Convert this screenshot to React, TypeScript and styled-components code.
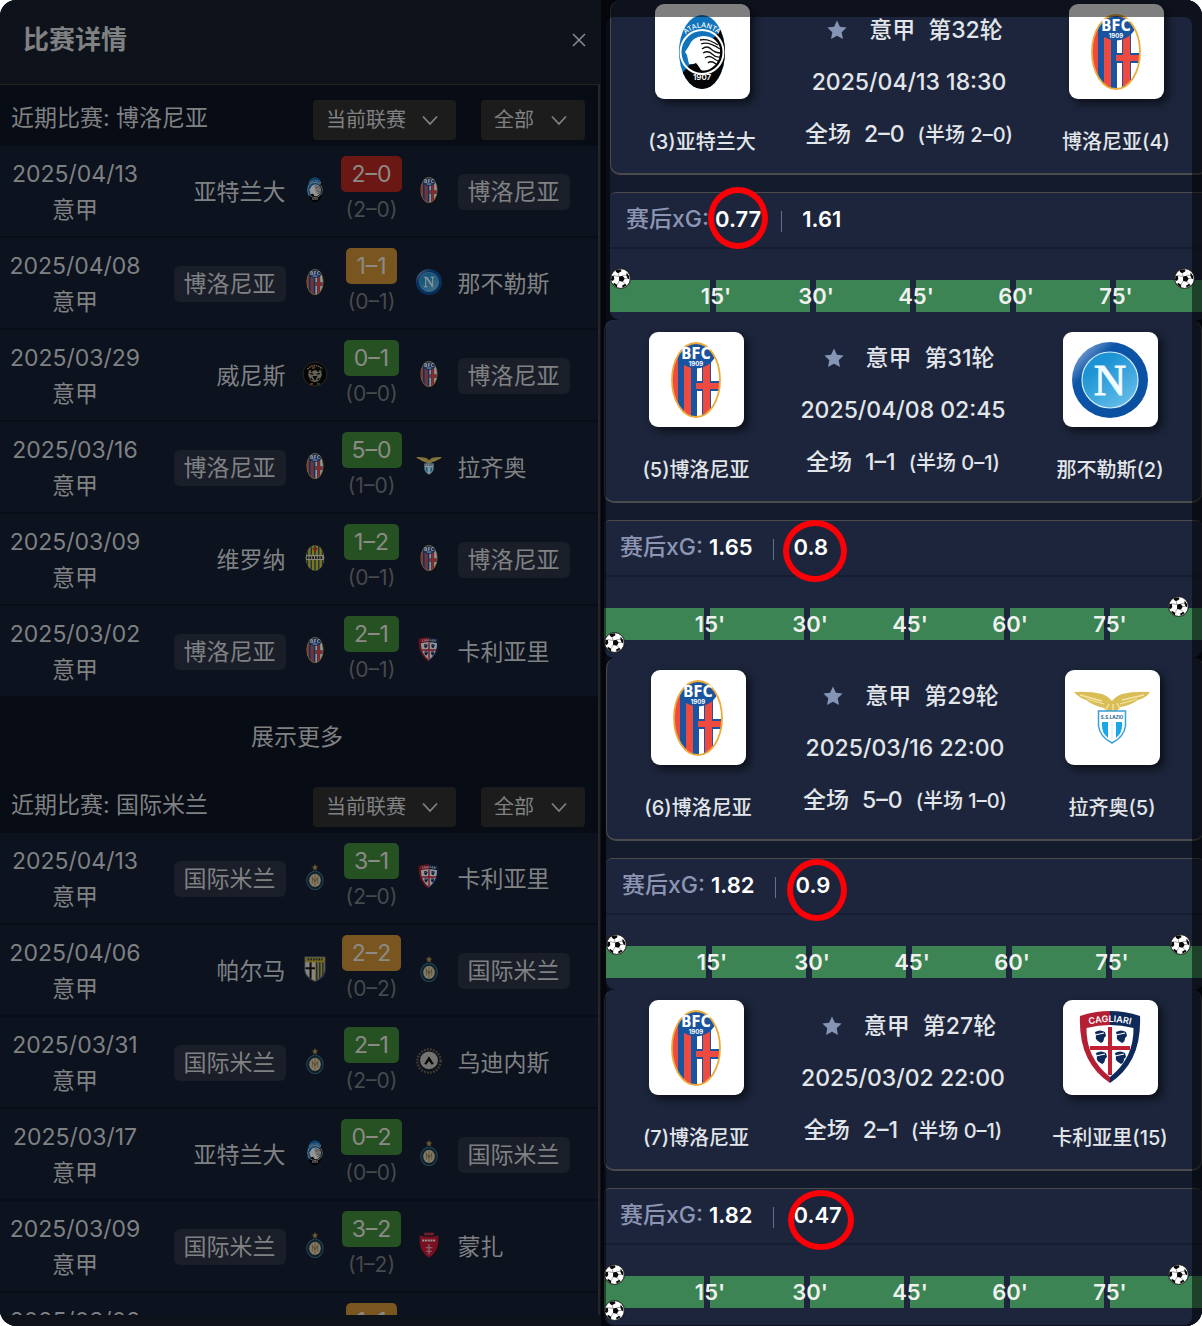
import React, { useId } from "react";
import styled, { createGlobalStyle } from "styled-components";

const GlobalStyle = createGlobalStyle`
  *, *::before, *::after { box-sizing: border-box; }
  body {
    margin: 0;
    background: #ffffff;
    font-family: Inter, "Noto Sans CJK SC", sans-serif;
  }
  button, select { font: inherit; color: inherit; }
  ul { list-style: none; margin: 0; padding: 0; }
  h1, h2, p { margin: 0; font: inherit; }
`;

/* ---------- club crests ---------- */

type Club =
  | "atalanta" | "bologna" | "napoli" | "lazio" | "cagliari" | "venezia"
  | "verona" | "inter" | "parma" | "udinese" | "monza";

const Atalanta = ({ id }: { id: string }) => (
  <>
    <clipPath id={id}><ellipse cx="38" cy="38" rx="23" ry="37" /></clipPath>
    <g clipPath={`url(#${id})`}>
      <rect width="76" height="76" fill="#1273bd" />
      <path d="M62 10 L12 66 V76 H62Z" fill="#050505" />
      <ellipse cx="38" cy="38" rx="21.500" ry="22" fill="none" stroke="#fff" strokeWidth="2" />
      <path d="M24 46 L23 41 L21 38 L25 32 Q28 23 39 22 Q52 22 56 34 Q57 46 50 52 Q43 58 37 56 Q34 51 32 49 Q28 51 25 50Z" fill="#fff" />
      <path d="M36 26 Q44 24 54 31 M37 30 Q44 27 56 35 M38 35 Q43 31 47 35 T57 39 M39 39 Q44 36 48 40 T57 43 M41 44 Q45 41 49 44 T55 47 M44 49 Q47 46 52 50" fill="none" stroke="#111" strokeWidth="1.300" />
    </g>
    <path id={`${id}t`} d="M21 21 Q38 6 55 21" fill="none" />
    <text fill="#fff" fontSize="7"><textPath href={`#${id}t`} startOffset="50%" textAnchor="middle">ATALANTA</textPath></text>
    <text x="38" y="66" fill="#fff" fontSize="8" fontWeight="600" textAnchor="middle">1907</text>
  </>
);

const Bologna = ({ id }: { id: string }) => (
  <>
    <clipPath id={id}><ellipse cx="38" cy="38" rx="24" ry="37" /></clipPath>
    <g clipPath={`url(#${id})`}>
      <rect width="76" height="76" fill="#fff" />
      <rect x="12" width="8" height="76" fill="#ef4a40" />
      <rect x="20" width="6" height="76" fill="#1954a0" />
      <rect x="26" width="7" height="76" fill="#ef4a40" />
      <rect x="33" width="6" height="76" fill="#1954a0" />
      <rect x="44" y="20" width="9" height="56" fill="#1954a0" />
      <rect x="39" y="39" width="25" height="10" fill="#1954a0" />
      <rect x="45" y="20" width="7" height="56" fill="#ef4a40" />
      <rect x="38" y="41" width="26" height="6" fill="#ef4a40" />
      <circle cx="38" cy="5" r="21.500" fill="#1954a0" />
    </g>
    <ellipse cx="38" cy="38" rx="24" ry="37" fill="none" stroke="#ecaa38" strokeWidth="1.800" />
    <text x="38" y="17" fill="#fff" fontFamily="'Liberation Sans Narrow', 'DejaVu Sans Condensed', sans-serif" fontSize="15" fontWeight="700" textAnchor="middle">BFC</text>
    <text x="38" y="24" fill="#fff" fontSize="6" fontWeight="700" textAnchor="middle">1909</text>
  </>
);

const Napoli = ({ id }: { id: string }) => (
  <>
    <linearGradient id={`${id}a`} x1="0" y1="0" x2="1" y2="1">
      <stop offset="0.1" stopColor="#7fa2d2" /><stop offset="0.3" stopColor="#0c55a8" /><stop offset="1" stopColor="#0a4f9f" />
    </linearGradient>
    <linearGradient id={`${id}b`} x1="0" y1="0" x2="0.7" y2="1">
      <stop offset="0.3" stopColor="#1c93d4" /><stop offset="1" stopColor="#62bce9" />
    </linearGradient>
    <circle cx="38" cy="38" r="38" fill={`url(#${id}a)`} />
    <circle cx="38" cy="38" r="28" fill={`url(#${id}b)`} stroke="#d3ecf8" strokeWidth="1.200" />
    <text x="38" y="53" fill="#f2fbff" stroke="#f2fbff" strokeWidth="1" fontFamily="Liberation Serif, serif" fontSize="45" textAnchor="middle">N</text>
  </>
);

const Lazio = () => (
  <>
    <path d="M0 12 Q16 11 28 14 Q34 16 38 21 Q42 16 48 14 Q60 11 76 12 Q72 18 64 20 Q55 26 46 27 Q43 33 37 32 Q32 32 30 28 Q20 26 12 20 Q4 17 0 12Z" fill="#d9bd57" />
    <path d="M6 15 L28 21 M13 19 L30 24 M70 15 L48 20 M63 19 L46 24 M35 24 L31 31 M39 24 V31 M43 23 L46 29" stroke="#f4e5a4" strokeWidth="1.300" fill="none" />
    <path d="M24.500 31 H51.500 V46 Q50 57 38 63 Q26 57 24.500 46Z" fill="#fff" stroke="#3b9fd7" strokeWidth="1.500" />
    <path d="M28 42 H34 V58 Q28 53 28 46Z M42 42 H48 V46 Q48 53 42 58Z" fill="#19a7e8" />
    <path d="M38 42V60" stroke="#cfe9f6" strokeWidth="1" />
    <text x="38" y="39" fill="#23608f" fontSize="4.500" fontWeight="700" textAnchor="middle">S.S.LAZIO</text>
  </>
);

const Mask = ({ x, y }: { x: number; y: number }) => (
  <g transform={`translate(${x} ${y})`}>
    <path d="M-5 -5 Q0 -8 5 -5 L6 -1 L4 1 Q4 5 1 6 L-2 4 Q-5 2 -4 -1Z" fill="#0d2a5b" />
    <path d="M-5 -2 L4 -4" stroke="#fff" strokeWidth="1.200" />
  </g>
);

const Cagliari = ({ id }: { id: string }) => (
  <>
    <path d="M8 6 Q23 1 38 1 V73 Q6 52 8 6Z" fill="#b41f33" />
    <path d="M68 6 Q53 1 38 1 V73 Q70 52 68 6Z" fill="#0d2a5b" />
    <path d="M14.500 18 Q38 12 61.500 18 Q62 48 38 67 Q14 48 14.500 18Z" fill="#fff" />
    <path d="M36 17 H40 V36 H58 V40 H40 V65 H36 V40 H18 V36 H36Z" fill="#c01f34" />
    <Mask x={28} y={27} /><Mask x={49} y={27} /><Mask x={29} y={48} /><Mask x={48} y={48} />
    <path id={id} d="M14 15.500 Q38 8.500 62 15.500" fill="none" />
    <text fill="#fff" fontSize="9" fontWeight="600"><textPath href={`#${id}`} startOffset="50%" textAnchor="middle">CAGLIARI</textPath></text>
  </>
);

const Venezia = () => (
  <>
    <circle cx="38" cy="38" r="35" fill="#0b0b0a" stroke="#5b5748" strokeWidth="2" />
    <path d="M16 24 Q38 2 60 24" fill="none" stroke="#b5ad90" strokeWidth="5" strokeDasharray="4 3" />
    <path d="M20 28 L24 26 L30 30 L38 26 L46 30 L52 26 L56 28 L58 42 L50 58 L38 62 L26 58 L18 42Z" fill="#aaa590" />
    <path d="M24 36 L33 39 M52 36 L43 39 M34 46H42L38 54Z M28 32V28 M48 32V28 M26 50L30 56 M50 50L46 56" stroke="#0b0b0a" strokeWidth="4" fill="#0b0b0a" />
    <path d="M24 68 L32 66" stroke="#d0622d" strokeWidth="5" /><path d="M44 66 L52 68" stroke="#3b8b51" strokeWidth="5" />
    <path d="M30 22 L38 18" stroke="#d0622d" strokeWidth="5" />
  </>
);

const Verona = ({ id }: { id: string }) => (
  <>
    <clipPath id={id}><ellipse cx="38" cy="38" rx="27" ry="37" /></clipPath>
    <g clipPath={`url(#${id})`}>
      <rect width="76" height="76" fill="#d8cb2e" />
      <path d="M16 0V76 M27 0V76 M38 0V76 M49 0V76 M60 0V76" stroke="#235289" strokeWidth="4" />
      <rect y="29" width="76" height="15" fill="#e9e5cf" />
      <path d="M14 37H62" stroke="#282828" strokeWidth="8" strokeDasharray="5 3" />
      <path d="M30 8 H46 L38 22Z" fill="#c9382d" />
    </g>
  </>
);

const Inter = () => (
  <>
    <path d="M38 0l3 7h7l-6 5 2 7-6-4-6 4 2-7-6-5h7z" fill="#bd9b55" />
    <ellipse cx="38" cy="48" rx="24" ry="27" fill="#11344f" stroke="#3b7797" strokeWidth="3" />
    <ellipse cx="38" cy="48" rx="18" ry="20" fill="#e0d6b4" stroke="#2b2a20" strokeWidth="2" />
    <path d="M30 58V39L38 53L46 39V58 M38 33V63" fill="none" stroke="#9b8a60" strokeWidth="3" />
  </>
);

const Parma = () => (
  <>
    <path d="M8 2H68V42Q67 63 38 75Q9 63 8 42Z" fill="#d2bc35" stroke="#3b538b" strokeWidth="3" />
    <path d="M10 18H38V72Q10 60 10 42Z" fill="#e8e5dd" />
    <path d="M25 18V66 M10 36H38" stroke="#171717" strokeWidth="6" />
    <path d="M43 18V71 M52 18V66 M61 18V60" stroke="#274a83" strokeWidth="4" />
    <path d="M16 10H60" stroke="#303a4b" strokeWidth="7" strokeDasharray="5 3" />
  </>
);

const Udinese = () => (
  <>
    <circle cx="38" cy="38" r="34" fill="none" stroke="#756650" strokeWidth="7" strokeDasharray="5 4" />
    <circle cx="38" cy="36" r="26" fill="#c9c7c3" />
    <path d="M24 46L38 24L52 46L46 49L38 38L30 49Z" fill="#101010" />
  </>
);

const Monza = () => (
  <>
    <path d="M24 2H52V10H24Z" fill="#c33446" />
    <path d="M11 10Q38 18 65 10V32Q62 60 38 75Q14 60 11 32Z" fill="#d11937" />
    <path d="M18 25H58" stroke="#fff" strokeWidth="6" strokeDasharray="6 2" />
    <path d="M38 35V66 M28 46H48 M30 56H46" stroke="#f3c6cb" strokeWidth="3" />
  </>
);

const drawings: Record<Club, React.ComponentType<{ id: string }>> = {
  atalanta: Atalanta, bologna: Bologna, napoli: Napoli, lazio: Lazio, cagliari: Cagliari,
  venezia: Venezia, verona: Verona, inter: Inter, parma: Parma, udinese: Udinese, monza: Monza,
};

const CrestSvg = styled.svg<{ $dim?: boolean }>`
  display: block;
  width: ${(p) => (p.$dim ? 26 : 76)}px;
  height: ${(p) => (p.$dim ? 26 : 76)}px;
  margin-bottom: ${(p) => (p.$dim ? 4 : 0)}px;
  filter: ${(p) => (p.$dim ? "brightness(0.58)" : "none")};
`;

function Crest({ club, dim }: { club: Club; dim?: boolean }) {
  const id = useId();
  const Drawing = drawings[club];
  return <CrestSvg viewBox="0 0 76 76" $dim={dim} aria-hidden="true"><Drawing id={id} /></CrestSvg>;
}

/* ---------- shell ---------- */

const Shell = styled.main`
  display: grid;
  grid-template-columns: minmax(0, 1fr) minmax(0, 1fr);
  height: 100vh;
  overflow: hidden;
  border-radius: 16px;
  background: #080d17;
`;

const History = styled.section`
  display: flex;
  flex-direction: column;
  min-width: 0;
  min-height: 0;
  padding-bottom: 11px;
  background: #0e131b;
  color: #7f8183;
`;

const HistoryHeader = styled.header`
  display: flex;
  align-items: center;
  justify-content: space-between;
  flex: none;
  height: 85px;
  padding: 0 15px 4px 23px;
  border-bottom: 1px solid #22221f;
`;

const HistoryTitle = styled.h1`
  font-size: 26px;
  font-weight: 700;
  line-height: 36px;
`;

const CloseButton = styled.button`
  display: grid;
  place-items: center;
  width: 14px;
  height: 14px;
  padding: 0;
  border: 0;
  background: none;
  color: #8b8d90;
`;

const HistoryBody = styled.div`
  flex: 1;
  min-height: 0;
  margin-right: 1px;
  overflow-y: auto;
  scrollbar-width: none;
  border-right: 2px solid #24262a;
  background: #080c15;
`;

/* ---------- recent results ---------- */

const GroupHeader = styled.div`
  display: flex;
  align-items: flex-start;
  gap: 25px;
  height: 61px;
  padding: 15px 13px 0 11px;
`;

const GroupTitle = styled.h2`
  flex: 1;
  font-size: 23px;
  line-height: 36px;
  white-space: nowrap;
`;

const SelectBox = styled.div<{ $wide?: boolean }>`
  position: relative;
  width: ${(p) => (p.$wide ? 143 : 104)}px;
`;

const Select = styled.select`
  appearance: none;
  width: 100%;
  height: 40px;
  padding: 0 0 0 13px;
  border: 0;
  border-radius: 4px;
  background: #1c1c1c;
  font-size: 20px;
`;

const SelectArrow = styled.svg`
  position: absolute;
  top: 12px;
  right: 18px;
  width: 16px;
  height: 16px;
  pointer-events: none;
`;

const Row = styled.li`
  display: grid;
  grid-template-columns: 150px minmax(0, 1fr) 26px 56px 26px minmax(0, 1fr);
  column-gap: 16px;
  align-items: center;
  height: 92px;
  padding: 10px 21px 8px 0;
  border-bottom: 2px solid #080d18;
  background: #0c121e;
  font-size: 23px;
  line-height: 36px;
  white-space: nowrap;
`;

const Played = styled.div`
  text-align: center;
`;

const Name = styled.span<{ $picked: boolean; $home?: boolean }>`
  justify-self: ${(p) => (p.$home ? "end" : "start")};
  padding: 0 ${(p) => (p.$picked ? 10 : 0)}px;
  border-radius: 6px;
  background: ${(p) => (p.$picked ? "#1a1e29" : "transparent")};
`;

const ScoreCell = styled.div`
  display: flex;
  flex-direction: column;
  align-items: center;
`;

const toneColor = { loss: "#6b1713", draw: "#79561f", win: "#265223" };

const Score = styled.span<{ $tone: keyof typeof toneColor }>`
  padding: 0 10px;
  border-radius: 5px;
  background: ${(p) => toneColor[p.$tone]};
  color: #8c8a86;
`;

const HalfScore = styled.span`
  color: #47494c;
  font-size: 21px;
`;

const MoreButton = styled.button`
  display: block;
  width: 100%;
  height: 74px;
  padding: 0 4px 0 0;
  border: 0;
  background: none;
  font-size: 23px;
`;

type Result = {
  date: string; home: string; homeClub: Club; away: string; awayClub: Club;
  score: string; half: string; tone: keyof typeof toneColor;
};

const r = (
  date: string, home: string, homeClub: Club, score: string, half: string,
  tone: keyof typeof toneColor, away: string, awayClub: Club,
): Result => ({ date, home, homeClub, score, half, tone, away, awayClub });

const bolognaResults = [
  r("2025/04/13", "亚特兰大", "atalanta", "2–0", "(2–0)", "loss", "博洛尼亚", "bologna"),
  r("2025/04/08", "博洛尼亚", "bologna", "1–1", "(0–1)", "draw", "那不勒斯", "napoli"),
  r("2025/03/29", "威尼斯", "venezia", "0–1", "(0–0)", "win", "博洛尼亚", "bologna"),
  r("2025/03/16", "博洛尼亚", "bologna", "5–0", "(1–0)", "win", "拉齐奥", "lazio"),
  r("2025/03/09", "维罗纳", "verona", "1–2", "(0–1)", "win", "博洛尼亚", "bologna"),
  r("2025/03/02", "博洛尼亚", "bologna", "2–1", "(0–1)", "win", "卡利亚里", "cagliari"),
];

const interResults = [
  r("2025/04/13", "国际米兰", "inter", "3–1", "(2–0)", "win", "卡利亚里", "cagliari"),
  r("2025/04/06", "帕尔马", "parma", "2–2", "(0–2)", "draw", "国际米兰", "inter"),
  r("2025/03/31", "国际米兰", "inter", "2–1", "(2–0)", "win", "乌迪内斯", "udinese"),
  r("2025/03/17", "亚特兰大", "atalanta", "0–2", "(0–0)", "win", "国际米兰", "inter"),
  r("2025/03/09", "国际米兰", "inter", "3–2", "(1–2)", "win", "蒙扎", "monza"),
  r("2025/03/02", "那不勒斯", "napoli", "1–1", "(0–1)", "draw", "国际米兰", "inter"),
];

function Filter({ label, value, wide }: { label: string; value: string; wide?: boolean }) {
  return (
    <SelectBox $wide={wide}>
      <Select aria-label={label} defaultValue={value}><option>{value}</option></Select>
      <SelectArrow viewBox="0 0 16 16" fill="none" stroke="currentColor" strokeWidth="1.800" aria-hidden="true">
        <path d="M1 4.500L8 12L15 4.500" />
      </SelectArrow>
    </SelectBox>
  );
}

function Group({ team, results }: { team: string; results: Result[] }) {
  return (
    <>
      <GroupHeader>
        <GroupTitle>近期比赛: {team}</GroupTitle>
        <Filter label="联赛" value="当前联赛" wide />
        <Filter label="主客场" value="全部" />
      </GroupHeader>
      <ul>
        {results.map((m) => (
          <Row key={m.date}>
            <Played><div>{m.date}</div><div>意甲</div></Played>
            <Name $home $picked={m.home === team}>{m.home}</Name>
            <Crest club={m.homeClub} dim />
            <ScoreCell><Score $tone={m.tone}>{m.score}</Score><HalfScore>{m.half}</HalfScore></ScoreCell>
            <Crest club={m.awayClub} dim />
            <Name $picked={m.away === team}>{m.away}</Name>
          </Row>
        ))}
      </ul>
    </>
  );
}

/* ---------- match reports ---------- */

const Reports = styled.section`
  position: relative;
  min-width: 0;
  min-height: 0;
  overflow: hidden;
`;

const Report = styled.article<{ $shift: number }>`
  margin: 0 ${(p) => -p.$shift}px 0 ${(p) => 3 + p.$shift}px;
  border-radius: 10px;
  background: #131b2c;
  color: #e2e5e9;
`;

const Summary = styled.div<{ $top: number }>`
  display: grid;
  grid-template-columns: 182px minmax(0, 1fr) 182px;
  padding: ${(p) => p.$top}px 0 19px;
  border: 1px solid #4b4b4c;
  border-top: 0;
  border-bottom-width: 2px;
  border-radius: 10px;
  background: #1c253b;
`;

const Side = styled.div`
  display: flex;
  flex-direction: column;
  align-items: center;
  gap: 31px;
  font-size: 20px;
  font-weight: 500;
  line-height: 24px;
  white-space: nowrap;
`;

const Badge = styled.div`
  display: grid;
  place-items: center;
  width: 95px;
  height: 95px;
  border-radius: 9px;
  background: #ffffff;
  box-shadow: 4px 4px 9px rgba(0, 0, 0, 0.6);
`;

const Facts = styled.div`
  display: flex;
  flex-direction: column;
  align-items: center;
  gap: 22px;
  padding-top: 11px;
  font-size: 23px;
  font-weight: 500;
  line-height: 30px;
  white-space: nowrap;
`;

const Round = styled.div`
  display: flex;
  align-items: center;
  gap: 13px;
  padding-left: 12px;
`;

const StarButton = styled.button`
  display: grid;
  place-items: center;
  width: 20px;
  height: 20px;
  margin-right: 9px;
  padding: 0;
  border: 0;
  background: none;
  color: #8495b5;
`;

const FullTime = styled.div`
  display: flex;
  align-items: baseline;
  gap: 13px;
`;

const HalfTime = styled.span`
  font-size: 20px;
`;

const Expected = styled.div`
  display: flex;
  align-items: center;
  height: 57px;
  margin-top: 17px;
  padding: 0 0 2px 16px;
  border-top: 1px solid #4b4b4c;
  border-bottom: 2px solid #151e31;
  border-radius: 6px 6px 0 0;
  background: #1c253b;
  font-size: 23px;
  font-weight: 500;
  line-height: 30px;
`;

const ExpectedLabel = styled.span`
  margin-right: 6px;
  color: #8d95b4;
`;

const ExpectedValue = styled.span`
  position: relative;
  color: #ffffff;
  font-size: 22px;
  font-weight: 600;
`;

const Divider = styled.span`
  width: 1px;
  height: 21px;
  margin: 4px 20px 0;
  background: #66708a;
`;

const Marker = styled.span<{ $w: number; $h: number; $dx: number; $dy: number }>`
  position: absolute;
  z-index: 3;
  left: calc(50% + ${(p) => p.$dx}px);
  top: calc(50% + ${(p) => p.$dy}px);
  width: ${(p) => p.$w}px;
  height: ${(p) => p.$h}px;
  border: 6px solid #fb0007;
  border-radius: 50%;
  transform: translate(-50%, -50%);
`;

const Timeline = styled.div<{ $bottom: number }>`
  position: relative;
  padding: 31px 0 ${(p) => p.$bottom}px;
  border-radius: 0 0 10px 10px;
  background: #1c253b;
`;

const Track = styled.div`
  display: grid;
  grid-template-columns: repeat(6, minmax(0, 1fr));
  height: 32px;
  margin-right: -8px;
  padding-left: 6px;
  background: linear-gradient(#3c8453, #3c8453) 0 0 / 6px 100% no-repeat;
`;

const Quarter = styled.div`
  display: flex;
  justify-content: flex-end;
  background: #3c8453;
  border-right: 6px solid #1c253b;
`;

const Minute = styled.span`
  flex: none;
  width: 40px;
  margin-right: -26px;
  color: #eef1ee;
  font-size: 22px;
  font-weight: 600;
  line-height: 32px;
  text-align: center;
  z-index: 1;
`;

const BallSvg = styled.svg<{ $end: boolean; $below: boolean }>`
  position: absolute;
  z-index: 2;
  left: ${(p) => (p.$end ? "calc(100% - 34px)" : "0")};
  top: ${(p) => (p.$below ? 55 : 19)}px;
  width: 21px;
  height: 21px;
`;

const Frame = styled.div`
  position: absolute;
  z-index: 1;
  inset: 17px 10px 1px 5px;
  border-radius: 8px;
  box-shadow: 0 0 0 20px rgba(0, 0, 0, 0.5);
  pointer-events: none;
`;

type BallSpot = "startAbove" | "startBelow" | "endAbove";

function Ball({ spot }: { spot: BallSpot }) {
  return (
    <BallSvg $end={spot === "endAbove"} $below={spot === "startBelow"} viewBox="0 0 22 22" aria-hidden="true">
      <circle cx="11" cy="11" r="10.400" fill="#fff" stroke="#111" strokeWidth="1" />
      <path d="M9.500 9L13 8.200L15.500 11L13.500 14.500L9.500 13.500Z M6.500 1.800L11.500 1.300L12 3.500L8.500 5.500L6 4Z M17.500 5L20 8.500L20.500 12L18.500 11L17 7.500Z M17.500 18L13.500 20.500L12.500 18.500L16 16.500Z M7.500 20.500L3.500 17.500L4 15.500L7.500 17.500Z M1 12.500L1.600 8L4 8L4.500 11.500L3 13.500Z" fill="#080808" />
      <path d="M9.500 9L8.500 5.500 M13 8.200L17 7.500 M15.500 11L18.500 11 M13.500 14.500L16 16.500 M9.500 13.500L7.500 17.500 M9.500 9L4 8" stroke="#666" strokeWidth="0.600" />
    </BallSvg>
  );
}

type Ring = { on: "home" | "away"; w: number; h: number; dx: number; dy: number };

type ReportData = {
  shift: number; top: number; bottom: number; round: string; time: string; full: string; half: string;
  home: string; homeClub: Club; away: string; awayClub: Club; xgHome: string; xgAway: string;
  ring: Ring; balls: BallSpot[];
};

const reports: ReportData[] = [
  {
    shift: 6, top: 4, bottom: 8, round: "第32轮", time: "2025/04/13 18:30", full: "2–0", half: "(半场 2–0)",
    home: "(3)亚特兰大", homeClub: "atalanta", away: "博洛尼亚(4)", awayClub: "bologna",
    xgHome: "0.77", xgAway: "1.61", ring: { on: "home", w: 60, h: 62, dx: 0, dy: -1 }, balls: ["startAbove", "endAbove"],
  },
  {
    shift: 0, top: 12, bottom: 18, round: "第31轮", time: "2025/04/08 02:45", full: "1–1", half: "(半场 0–1)",
    home: "(5)博洛尼亚", homeClub: "bologna", away: "那不勒斯(2)", awayClub: "napoli",
    xgHome: "1.65", xgAway: "0.8", ring: { on: "away", w: 64, h: 62, dx: 4, dy: 4 }, balls: ["startBelow", "endAbove"],
  },
  {
    shift: 2, top: 12, bottom: 12, round: "第29轮", time: "2025/03/16 22:00", full: "5–0", half: "(半场 1–0)",
    home: "(6)博洛尼亚", homeClub: "bologna", away: "拉齐奥(5)", awayClub: "lazio",
    xgHome: "1.82", xgAway: "0.9", ring: { on: "away", w: 60, h: 62, dx: 4, dy: 5 }, balls: ["startAbove", "endAbove"],
  },
  {
    shift: 0, top: 10, bottom: 18, round: "第27轮", time: "2025/03/02 22:00", full: "2–1", half: "(半场 0–1)",
    home: "(7)博洛尼亚", homeClub: "bologna", away: "卡利亚里(15)", awayClub: "cagliari",
    xgHome: "1.82", xgAway: "0.47", ring: { on: "away", w: 66, h: 60, dx: 3, dy: 5 }, balls: ["startAbove", "startBelow", "endAbove"],
  },
];

const minutes = ["15'", "30'", "45'", "60'", "75'"];

function MatchReport({ data }: { data: ReportData }) {
  const { ring } = data;
  const marker = <Marker $w={ring.w} $h={ring.h} $dx={ring.dx} $dy={ring.dy} aria-hidden="true" />;
  return (
    <Report $shift={data.shift}>
      <Summary $top={data.top}>
        <Side><Badge><Crest club={data.homeClub} /></Badge><span>{data.home}</span></Side>
        <Facts>
          <Round>
            <StarButton aria-label="收藏">
              <svg width="20" height="20" viewBox="0 0 20 20" fill="currentColor" aria-hidden="true">
                <path d="M10 0.500L12.900 6.800L19.600 7.600L14.700 12.300L16 19L10 15.700L4 19L5.300 12.300L0.400 7.600L7.100 6.800Z" />
              </svg>
            </StarButton>
            <span>意甲</span><span>{data.round}</span>
          </Round>
          <p>{data.time}</p>
          <FullTime><span>全场</span><span>{data.full}</span><HalfTime>{data.half}</HalfTime></FullTime>
        </Facts>
        <Side><Badge><Crest club={data.awayClub} /></Badge><span>{data.away}</span></Side>
      </Summary>
      <Expected>
        <ExpectedLabel>赛后xG:</ExpectedLabel>
        <ExpectedValue>{data.xgHome}{ring.on === "home" && marker}</ExpectedValue>
        <Divider />
        <ExpectedValue>{data.xgAway}{ring.on === "away" && marker}</ExpectedValue>
      </Expected>
      <Timeline $bottom={data.bottom}>
        <Track>
          {minutes.map((m) => <Quarter key={m}><Minute>{m}</Minute></Quarter>)}
          <Quarter />
        </Track>
        {data.balls.map((spot) => <Ball key={spot} spot={spot} />)}
      </Timeline>
    </Report>
  );
}

export default function App() {
  return (
    <>
      <GlobalStyle />
      <Shell>
        <History>
          <HistoryHeader>
            <HistoryTitle>比赛详情</HistoryTitle>
            <CloseButton aria-label="关闭">
              <svg width="14" height="14" viewBox="0 0 14 14" stroke="currentColor" strokeWidth="1.500" aria-hidden="true">
                <path d="M1 1L13 13M13 1L1 13" />
              </svg>
            </CloseButton>
          </HistoryHeader>
          <HistoryBody>
            <Group team="博洛尼亚" results={bolognaResults} />
            <MoreButton>展示更多</MoreButton>
            <Group team="国际米兰" results={interResults} />
          </HistoryBody>
        </History>
        <Reports>
          {reports.map((d) => <MatchReport key={d.round} data={d} />)}
          <Frame />
        </Reports>
      </Shell>
    </>
  );
}
